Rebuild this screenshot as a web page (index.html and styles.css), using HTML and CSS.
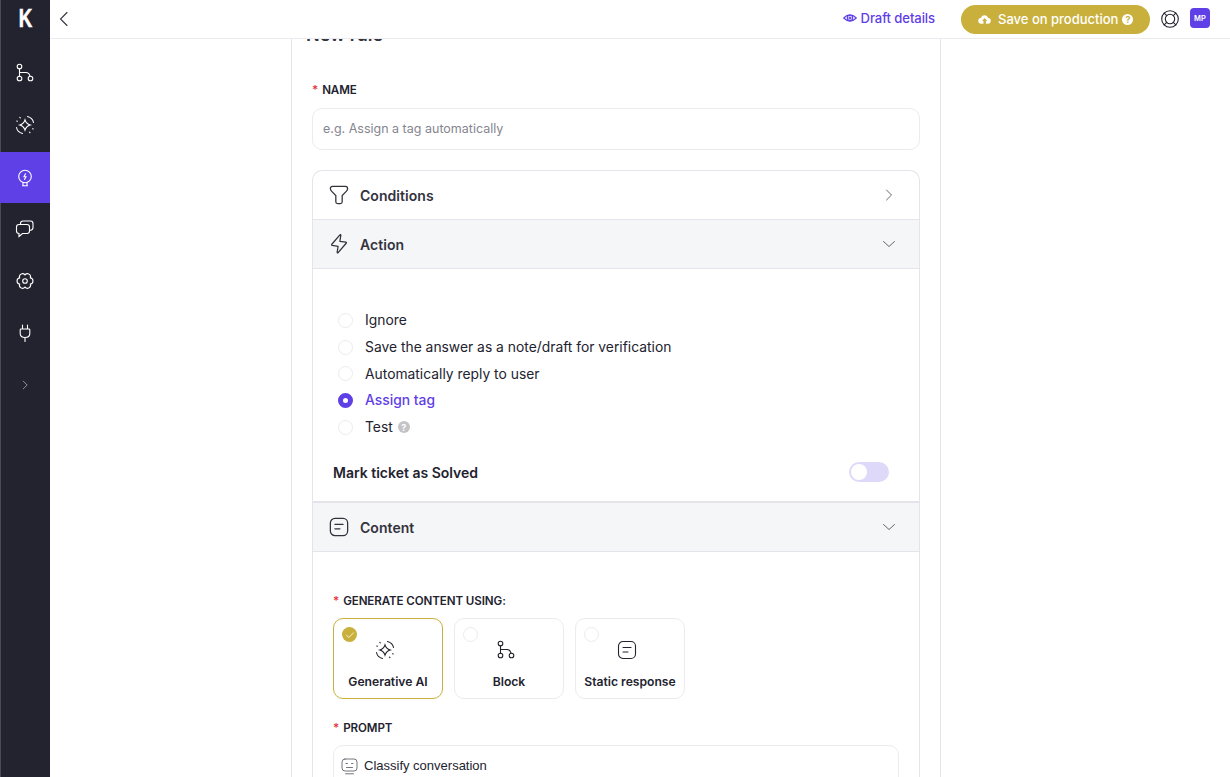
FILE: index.html
```html
<!doctype html>
<html lang="en">
  <head>
    <meta charset="UTF-8" />
    <title>New rule</title>
    <link rel="stylesheet" href="styles.css">
  </head>
  <body>
    <aside class="sidebar">
      <div class="logo">K</div>
      <a class="nav-item">
        <svg width="20" height="20" viewBox="0 0 20 20"><circle cx="4.5" cy="3.5" r="2.3"/><circle cx="4.5" cy="15.5" r="2.3"/><circle cx="15.5" cy="15.5" r="2.3"/><path d="M4.5 5.8v7.4M4.5 9.5h6.5q3 0 4 3.7"/></svg>
      </a>
      <a class="nav-item">
        <svg width="20" height="20" viewBox="0 0 20 20"><path d="M10 4.800Q11.200 8.800 15.200 10Q11.200 11.200 10 15.200Q8.800 11.200 4.800 10Q8.800 8.800 10 4.800z"/><path d="M12.500 1.500q5 1.200 6 6M7.500 18.500q-5-1.200-6-6M4.800 2.300l.5.5M1.800 6l.5.3M15 17.700l-.5-.5M18.200 14l-.5-.3"/></svg>
      </a>
      <a class="nav-item active">
        <svg width="20" height="20" viewBox="0 0 20 20"><circle cx="10" cy="8.500" r="6.300"/><path d="M7.500 17.800h5M8 14.800v3M12 14.800v3M10.500 5.800l-1.500 3h2l-1.500 2.700"/></svg>
      </a>
      <a class="nav-item">
        <svg width="20" height="20" viewBox="0 0 20 20"><path d="M5.500 5.500v-1q0-2.500 2.500-2.500h7.500q2.500 0 2.500 2.500v4q0 2.500-2.500 2.800h-1"/><path d="M4.500 5.500h7.500q2.500 0 2.500 2.500v4q0 2.500-2.500 2.500h-4.500l-3.500 3v-3q-2.500-.2-2.500-2.500v-4q0-2.500 2.500-2.500z"/></svg>
      </a>
      <a class="nav-item">
        <svg width="20" height="20" viewBox="0 0 20 20"><circle cx="10" cy="10" r="2.300"/><path d="M10 3.800A3.150 3.150 0 0 1 15.370 6.900A3.150 3.150 0 0 1 15.370 13.100A3.150 3.150 0 0 1 10 16.200A3.150 3.150 0 0 1 4.630 13.100A3.150 3.150 0 0 1 4.630 6.900A3.150 3.150 0 0 1 10 3.800z"/></svg>
      </a>
      <a class="nav-item">
        <svg width="20" height="20" viewBox="0 0 20 20"><path d="M7.500 2v4M12.500 2v4M6 6h8q.8 0 .8.800v3.700q0 4-4.800 4t-4.800-4v-3.700q0-.8.8-.8zM10 14.500v4"/></svg>
      </a>
      <a class="nav-item dim">
        <svg width="14" height="14" viewBox="0 0 14 14"><path d="M5 2.500l4.500 4.500-4.500 4.500"/></svg>
      </a>
    </aside>

    <div class="page">
      <header class="topbar">
        <svg class="back" width="16" height="16" viewBox="0 0 16 16"><path d="M11 1.500l-6.500 6.500 6.500 6.500"/></svg>
        <div class="topbar-right">
          <a class="draft-link">
            <svg width="14" height="14" viewBox="0 0 14 14"><path d="M.7 7q6.300-6.200 12.600 0q-6.300 6.200-12.600 0z"/><circle cx="7" cy="7" r="2.700"/><circle cx="7" cy="7" r="1"/></svg>
            Draft details
          </a>
          <button class="save-btn">
            <svg width="13" height="13" viewBox="0 0 14 14"><path d="M3.500 11.500a3 3 0 0 1-.4-6a4 4 0 0 1 7.800 0a3 3 0 0 1-.4 6h-2v-3h1.500l-2.800-3-2.800 3h1.500v3z" fill="#fff"/></svg>
            Save on production
            <span class="help-dot">?</span>
          </button>
          <svg class="lifebuoy" width="20" height="20" viewBox="0 0 20 20"><circle cx="10" cy="10" r="8.300"/><circle cx="10" cy="10" r="4.700"/><path d="M4.200 4.200l2.500 2.500M15.800 4.200l-2.500 2.500M4.200 15.800l2.500-2.500M15.800 15.800l-2.500-2.500"/></svg>
          <div class="avatar">MP</div>
        </div>
      </header>

      <main class="main">
        <section class="form-panel">
          <h2 class="title">New rule</h2>

          <label class="field-label name-label"><span class="req">*</span>NAME</label>
          <div class="text-input">e.g. Assign a tag automatically</div>

          <div class="accordion">
            <div class="acc-head">
              <svg class="acc-icon" width="22" height="22" viewBox="0 0 22 22"><path d="M1.500 4q0-2.500 2.500-2.500h14q2.500 0 2.500 2.500q0 1.500-1.500 3l-4.500 4.500v7q0 2-2 2h-3q-2 0-2-2v-7l-4.500-4.500q-1.500-1.500-1.500-3z"/></svg>
              <span>Conditions</span>
              <svg class="chev" width="14" height="14" viewBox="0 0 14 14"><path d="M4.500 2l5 5-5 5"/></svg>
            </div>
            <div class="acc-head open">
              <svg class="acc-icon" width="22" height="22" viewBox="0 0 22 22"><path d="M13 1.500l-1 6.500 6.500 1q1 .3.400 1.200l-8.900 10.300q-1 .8-1-.5l1-6.500-6.500-1q-1-.3-.4-1.200l8.900-10.300q1-.8 1 .5z" stroke-linejoin="round"/></svg>
              <span>Action</span>
              <svg class="chev" width="16" height="16" viewBox="0 0 16 16"><path d="M2.500 5.500l5.500 5 5.500-5"/></svg>
            </div>
            <div class="acc-body action-body">
              <ul class="radio-list">
                <li><i class="radio"></i>Ignore</li>
                <li><i class="radio"></i>Save the answer as a note/draft for verification</li>
                <li><i class="radio"></i>Automatically reply to user</li>
                <li class="selected"><i class="radio"></i>Assign tag</li>
                <li><i class="radio"></i>Test <span class="help-grey">?</span></li>
              </ul>
              <div class="toggle-row">
                <strong>Mark ticket as Solved</strong>
                <div class="toggle"><div class="knob"></div></div>
              </div>
            </div>
            <div class="acc-head open">
              <svg class="acc-icon" width="22" height="22" viewBox="0 0 22 22"><rect x="1.500" y="1.500" width="19" height="19" rx="5"/><path d="M6.500 8h9M6.500 13h5.500"/></svg>
              <span>Content</span>
              <svg class="chev" width="16" height="16" viewBox="0 0 16 16"><path d="M2.500 5.500l5.500 5 5.500-5"/></svg>
            </div>
            <div class="acc-body content-body">
              <label class="field-label"><span class="req">*</span>GENERATE CONTENT USING:</label>
              <div class="tiles">
                <div class="tile selected">
                  <i class="tile-check"><svg width="10" height="10" viewBox="0 0 10 10"><path d="M1.500 5.200l2.300 2.300 4.700-4.700"/></svg></i>
                  <svg class="tile-icon" width="20" height="20" viewBox="0 0 20 20"><path d="M10 4.800Q11.200 8.800 15.200 10Q11.200 11.200 10 15.200Q8.800 11.200 4.800 10Q8.800 8.800 10 4.800z"/><path d="M12.500 1.500q5 1.200 6 6M7.500 18.500q-5-1.200-6-6M4.800 2.300l.5.5M1.800 6l.5.3M15 17.700l-.5-.5M18.200 14l-.5-.3"/></svg>
                  <span>Generative AI</span>
                </div>
                <div class="tile">
                  <i class="tile-radio"></i>
                  <svg class="tile-icon" width="20" height="20" viewBox="0 0 20 20"><circle cx="4.500" cy="3.500" r="2.300"/><circle cx="4.500" cy="15.500" r="2.300"/><circle cx="15.500" cy="15.500" r="2.300"/><path d="M4.500 5.800v7.400M4.500 9.500h6.500q3 0 4 3.700"/></svg>
                  <span>Block</span>
                </div>
                <div class="tile">
                  <i class="tile-radio"></i>
                  <svg class="tile-icon" width="20" height="20" viewBox="0 0 20 20"><rect x="1.500" y="1.500" width="17" height="17" rx="4.500"/><path d="M6 7.500h8M6 12h5"/></svg>
                  <span>Static response</span>
                </div>
              </div>
              <label class="field-label prompt-label"><span class="req">*</span>PROMPT</label>
              <div class="prompt-box">
                <svg width="17" height="17" viewBox="0 0 17 17"><rect x="1" y="1" width="15" height="12" rx="3"/><path d="M5 5.500h1.500M10.500 5.500h1.500M5.500 9.500h6M4.500 15.800h8"/></svg>
                Classify conversation
              </div>
            </div>
          </div>
        </section>
      </main>
    </div>
  </body>
</html>
```

FILE: styles.css
```css
* {
  box-sizing: border-box;
}
html,
body {
  height: 100%;
}
body {
  display: flex;
  margin: 0;
  overflow: hidden;
  background: #fff;
  color: #23232f;
  font-family: Inter, "Liberation Sans", sans-serif;
  font-size: 13px;
}
svg {
  fill: none;
  stroke: currentColor;
  stroke-width: 1.1;
  stroke-linecap: round;
  flex-shrink: 0;
}

/* sidebar */
.sidebar {
  width: 50px;
  flex-shrink: 0;
  background: #232330;
  border-left: 1px solid #4a4a55;
  color: #fff;
}
.logo {
  height: 47px;
  padding-top: 2px;
  text-align: center;
  font-family: "Liberation Sans", sans-serif;
  font-size: 26px;
  line-height: 33px;
  font-weight: 700;
  -webkit-text-stroke: 0.6px #fff;
  transform: scaleX(0.72);
}
.nav-item {
  display: flex;
  height: 52px;
  align-items: center;
  justify-content: center;
  margin-left: -1px;
}
.nav-item.active {
  height: 51px;
  margin-top: 1px;
  background: #5f40e6;
}
.nav-item.dim {
  color: #9a9aa5;
}
.nav-item.dim svg {
  width: 12px;
  height: 12px;
}

/* top bar */
.page {
  flex: 1;
  min-width: 0;
  display: flex;
  flex-direction: column;
}
.topbar {
  display: flex;
  height: 39px;
  flex-shrink: 0;
  align-items: center;
  justify-content: space-between;
  padding: 0 20px 0 6px;
  border-bottom: 1px solid #ececf0;
  background: #fff;
  position: relative;
  z-index: 1;
}
.back {
  color: #33333d;
}
.topbar-right {
  display: flex;
  align-items: center;
}
.draft-link {
  display: flex;
  align-items: center;
  gap: 4px;
  margin-right: 26px;
  margin-top: -3px;
  color: #5f40e6;
  font-size: 13.100px;
  font-weight: 500;
  letter-spacing: -0.1px;
}
.save-btn {
  display: flex;
  align-items: center;
  gap: 7px;
  width: 189px;
  height: 29px;
  margin-right: 10px;
  padding: 0 0 0 17px;
  border: none;
  border-radius: 15px;
  background: #c9b03c;
  color: #fff;
  font-family: inherit;
  font-size: 13px;
  font-weight: 500;
}
.save-btn svg {
  stroke: none;
}
.help-dot {
  display: inline-flex;
  width: 11px;
  height: 11px;
  margin-left: -3px;
  align-items: center;
  justify-content: center;
  border-radius: 50%;
  background: #fff;
  color: #c9b03c;
  font-size: 9px;
  font-weight: 700;
}
.lifebuoy {
  margin-right: 10px;
  color: #23232f;
}
.avatar {
  display: flex;
  width: 20px;
  height: 20px;
  margin-top: -2px;
  align-items: center;
  justify-content: center;
  border-radius: 4px;
  background: #5f40e6;
  color: #fff;
  font-size: 7.500px;
  font-weight: 600;
}

/* form */
.main {
  flex: 1;
  min-height: 0;
  overflow: hidden;
}
.form-panel {
  width: 650px;
  margin-left: 241px;
  padding: 0 20px;
  border-left: 1px solid #e4e4ea;
  border-right: 1px solid #e4e4ea;
}
.title {
  height: 20px;
  margin: -14px 0 0 -6px;
  color: #33333d;
  font-size: 18px;
  line-height: 20px;
  font-weight: 600;
}
.field-label {
  display: block;
  color: #23232f;
  font-size: 11.600px;
  line-height: 14px;
  font-weight: 600;
  letter-spacing: -0.1px;
}
.name-label {
  margin-top: 38px;
}
.req {
  margin-right: 4px;
  color: #e5303a;
}
.text-input {
  height: 42px;
  margin-top: 11px;
  padding-left: 10px;
  border: 1px solid #ececf0;
  border-radius: 10px;
  color: #85858f;
  font-size: 12.500px;
  line-height: 40px;
}
.accordion {
  margin-top: 20px;
  border: 1px solid #e4e4ea;
  border-bottom: none;
  border-radius: 10px 10px 0 0;
}
.acc-head {
  display: flex;
  height: 49px;
  align-items: center;
  gap: 11px;
  padding: 0 23px 0 16px;
  border-bottom: 1px solid #e4e4ea;
  color: #33333d;
  font-size: 14px;
  font-weight: 600;
  letter-spacing: 0.05px;
}
.acc-head.open {
  background: #f5f6f8;
}
.acc-icon {
  width: 20px;
  height: 20px;
  stroke-width: 1.4;
}
.chev {
  margin-left: auto;
  color: #55555f;
  stroke-width: 0.9;
}
.acc-head.open .chev {
  margin-right: -1px;
}
.acc-body {
  padding: 0 20px;
}
.action-body {
  height: 234px;
  padding-top: 38px;
  border-bottom: 2px solid #e4e4ea;
}
.radio-list {
  margin: 0;
  padding: 0 0 0 5px;
  list-style: none;
  font-size: 13.850px;
}
.radio-list li {
  display: flex;
  height: 26.700px;
  align-items: center;
}
.radio {
  width: 15px;
  height: 15px;
  margin-right: 12px;
  border: 1px solid #ececf0;
  border-radius: 50%;
  background: #fff;
}
.selected .radio {
  border: 5px solid #5f40e6;
}
.radio-list .selected {
  color: #5f40e6;
  font-weight: 500;
}
.help-grey {
  display: inline-flex;
  width: 12px;
  height: 12px;
  margin-left: 5px;
  align-items: center;
  justify-content: center;
  border-radius: 50%;
  background: #c4c4c8;
  color: #fff;
  font-size: 9px;
  font-weight: 700;
}
.toggle-row {
  display: flex;
  height: 20px;
  align-items: center;
  justify-content: space-between;
  margin-top: 22px;
  padding-right: 10px;
  font-size: 14px;
}
.toggle-row strong {
  font-weight: 600;
}
.toggle {
  width: 40px;
  height: 20px;
  padding: 2px;
  border-radius: 10px;
  background: #dfd9f9;
}
.knob {
  width: 16px;
  height: 16px;
  border-radius: 50%;
  background: #fff;
}
.content-body {
  padding-top: 42px;
}
.tiles {
  display: flex;
  gap: 11px;
  margin-top: 10px;
}
.tile {
  position: relative;
  display: flex;
  width: 110px;
  height: 81px;
  flex-direction: column;
  align-items: center;
  padding-top: 21px;
  border: 1px solid #ececf0;
  border-radius: 10px;
  font-size: 12.150px;
  font-weight: 600;
}
.tile.selected {
  border-color: #c9b03c;
}
.tile-icon {
  margin: 0 0 14px -7px;
}
.tile-radio,
.tile-check {
  position: absolute;
  top: 8px;
  left: 8px;
  display: flex;
  width: 15px;
  height: 15px;
  align-items: center;
  justify-content: center;
  border: 1px solid #ececf0;
  border-radius: 50%;
}
.tile-check {
  border: none;
  background: #c9b03c;
  color: #fff;
}
.tile-check svg {
  stroke-width: 0.8;
}
.prompt-label {
  margin-top: 22px;
}
.prompt-box {
  display: flex;
  height: 60px;
  align-items: flex-start;
  gap: 6px;
  margin-top: 10px;
  padding: 12px 7px;
  border: 1px solid #ececf0;
  border-radius: 10px;
  font-family: "Liberation Sans", sans-serif;
  font-size: 13px;
  line-height: 16px;
}
.prompt-box svg {
  color: #66666f;
  stroke-width: 0.9;
}
```
